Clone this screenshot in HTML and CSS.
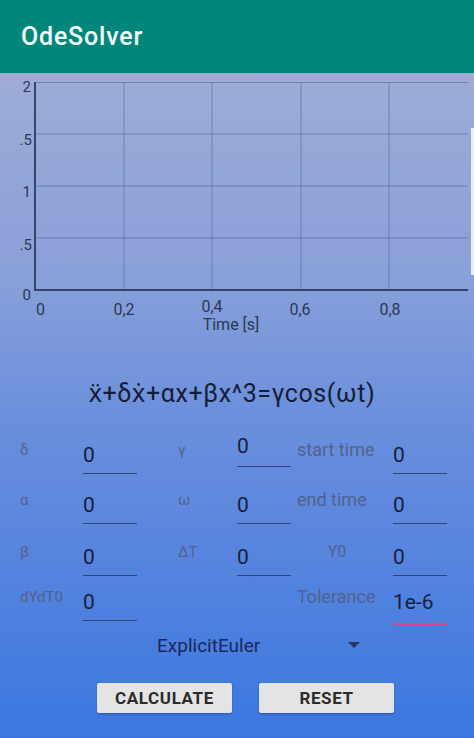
FILE: index.html
```html
<!DOCTYPE html>
<html>
<head>
<meta charset="utf-8">
<link rel="stylesheet" href="styles.css">
</head>
<body>
<header class="appbar"><span class="title">OdeSolver</span></header>
<main class="content">
  <div class="chart">
    <svg width="474" height="262" viewBox="0 0 474 262">
      <g class="grid">
        <line x1="35" y1="9.5" x2="468" y2="9.5"/>
        <line x1="35" y1="61" x2="468" y2="61"/>
        <line x1="35" y1="113" x2="468" y2="113"/>
        <line x1="35" y1="165" x2="468" y2="165"/>
        <line x1="124" y1="9" x2="124" y2="217"/>
        <line x1="212" y1="9" x2="212" y2="217"/>
        <line x1="301" y1="9" x2="301" y2="217"/>
        <line x1="389" y1="9" x2="389" y2="217"/>
      </g>
      <g class="axis">
        <line x1="35" y1="9" x2="35" y2="218"/>
        <line x1="34" y1="217" x2="468" y2="217"/>
      </g>
      <rect x="471" y="55" width="3" height="147" fill="#e9eef8"/>
      <g class="ylab">
        <text x="31" y="19">2</text>
        <text x="32" y="72">.5</text>
        <text x="31" y="124">1</text>
        <text x="32" y="177">.5</text>
        <text x="31" y="227">0</text>
      </g>
      <g class="xlab">
        <text x="36" y="242" class="start">0</text>
        <text x="124" y="242">0,2</text>
        <text x="212" y="239">0,4</text>
        <text x="300" y="242">0,6</text>
        <text x="390" y="242">0,8</text>
        <text x="231" y="257" class="xtitle">Time [s]</text>
      </g>
    </svg>
  </div>
  <div class="equation">ẍ+δẋ+αx+βx^3=γcos(ωt)</div>
  <div class="form">
    <div class="label small">δ</div>
    <div class="field">0</div>
    <div class="label small mid">γ</div>
    <div class="field raised">0</div>
    <div class="label right">start time</div>
    <div class="field">0</div>

    <div class="label small">α</div>
    <div class="field">0</div>
    <div class="label small mid">ω</div>
    <div class="field">0</div>
    <div class="label right">end time</div>
    <div class="field">0</div>

    <div class="label small">β</div>
    <div class="field">0</div>
    <div class="label small mid">ΔT</div>
    <div class="field">0</div>
    <div class="label right small center">Y0</div>
    <div class="field">0</div>

    <div class="label small">dYdT0</div>
    <div class="field">0</div>
    <div class="empty"></div>
    <div class="empty"></div>
    <div class="label right">Tolerance</div>
    <div class="field focused">1e-6</div>
  </div>
  <div class="spinner">
    <span class="spinner-text">ExplicitEuler</span>
    <span class="arrow"></span>
  </div>
  <div class="buttons">
    <button class="btn">Calculate</button>
    <button class="btn">Reset</button>
  </div>
</main>
</body>
</html>
```

FILE: styles.css
```css
html, body {
  margin: 0;
  padding: 0;
}
body {
  width: 474px;
  height: 738px;
  overflow: hidden;
  font-family: Roboto, "Noto Sans", sans-serif;
}
.appbar {
  height: 73px;
  background: #01877a;
  display: flex;
  align-items: center;
  padding-left: 21px;
}
.title {
  color: #f4fbfa;
  font-size: 25px;
  font-weight: 500;
  letter-spacing: 0.8px;
}
.content {
  height: 665px;
  background: linear-gradient(180deg, #9eacd6 0%, #8aa0d9 30%, #6b8fdd 52%, #3b77e0 100%);
}
.chart svg {
  display: block;
}
.grid line {
  stroke: #5e74a6;
  stroke-width: 1;
  opacity: 0.75;
}
.axis line {
  stroke: #34446a;
  stroke-width: 2;
}
.ylab text {
  font-family: Roboto, sans-serif;
  font-size: 15px;
  fill: #2d3852;
  text-anchor: end;
}
.xlab text {
  font-family: Roboto, sans-serif;
  font-size: 16px;
  fill: #2d3852;
  text-anchor: middle;
}
.xlab text.start {
  text-anchor: start;
}
.xlab text.xtitle {
  font-size: 16px;
}
.equation {
  padding-top: 45px;
  height: 28px;
  line-height: 28px;
  margin-bottom: 15px;
  text-align: center;
  padding-right: 10px;
  font-size: 25px;
  letter-spacing: 0.6px;
  color: #151d33;
}
.form {
  display: grid;
  padding-left: 20px;
  grid-template-columns: 63px 54px 100px 54px 102px 54px;
  grid-template-rows: 51px 50px 52px 45px;
  align-items: end;
}
.label {
  color: #52628a;
  font-size: 18px;
  line-height: 20px;
  padding-bottom: 14px;
  white-space: nowrap;
}
.label.small {
  font-size: 15px;
}
.label.mid {
  padding-left: 41px;
}
.label.right {
  padding-left: 6px;
  width: 80px;
}
.label.center {
  text-align: center;
  font-size: 16px;
}
.field {
  font-size: 21px;
  line-height: 24px;
  color: #17203a;
  padding-bottom: 6px;
  border-bottom: 1.5px solid #33456e;
  padding-left: 0;
}
.field.raised {
  margin-bottom: 7px;
  padding-bottom: 8px;
}
.field.focused {
  margin-bottom: -4px;
  padding-bottom: 9px;
  border-bottom: 2px solid #e2417c;
}
.spinner {
  margin-top: 4px;
  margin-left: 157px;
  width: 203px;
  height: 40px;
  display: flex;
  align-items: center;
  justify-content: space-between;
}
.spinner-text {
  font-size: 19px;
  color: #1b2858;
}
.arrow {
  width: 0;
  height: 0;
  border-left: 6px solid transparent;
  border-right: 6px solid transparent;
  border-top: 6px solid #2a3560;
}
.buttons {
  margin-top: 18px;
  padding-left: 97px;
  display: flex;
  gap: 27px;
}
.btn {
  width: 135px;
  height: 30px;
  border: none;
  border-radius: 2px;
  background: #e4e4e4;
  box-shadow: 0 1px 2px rgba(0, 0, 0, 0.3);
  font-family: Roboto, sans-serif;
  font-weight: 700;
  font-size: 17px;
  letter-spacing: 0.6px;
  text-transform: uppercase;
  color: #2b2b2b;
  padding: 0;
}
```
